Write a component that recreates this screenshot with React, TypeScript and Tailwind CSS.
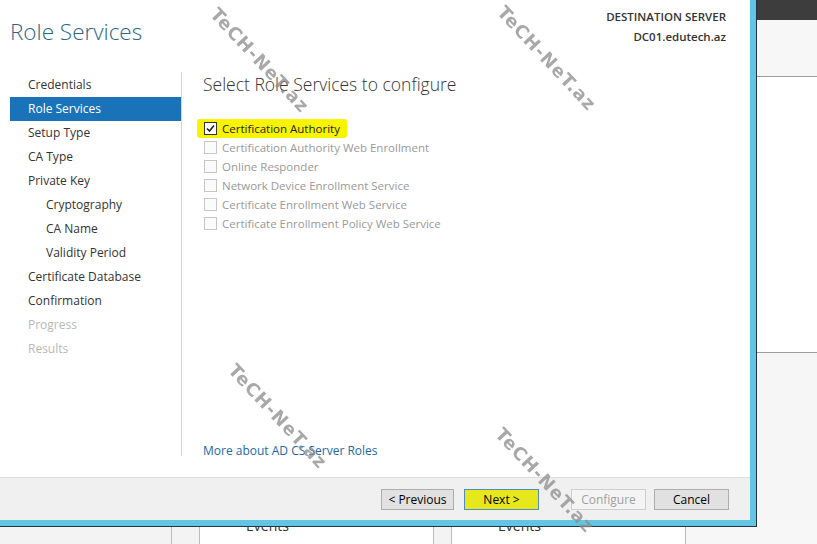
import React from "react";

const navItems: { label: string; indent?: boolean; selected?: boolean; disabled?: boolean }[] = [
  { label: "Credentials" },
  { label: "Role Services", selected: true },
  { label: "Setup Type" },
  { label: "CA Type" },
  { label: "Private Key" },
  { label: "Cryptography", indent: true },
  { label: "CA Name", indent: true },
  { label: "Validity Period", indent: true },
  { label: "Certificate Database" },
  { label: "Confirmation" },
  { label: "Progress", disabled: true },
  { label: "Results", disabled: true },
];

const services = [
  { label: "Certification Authority", checked: true },
  { label: "Certification Authority Web Enrollment" },
  { label: "Online Responder" },
  { label: "Network Device Enrollment Service" },
  { label: "Certificate Enrollment Web Service" },
  { label: "Certificate Enrollment Policy Web Service" },
];

function Checkbox({ checked }: { checked?: boolean }) {
  return (
    <div
      className={
        "w-[13px] h-[13px] border flex items-center justify-center " +
        (checked ? "border-[#333] bg-white" : "border-[#c6c6c6] bg-[#fbfbfb]")
      }
    >
      {checked && (
        <svg width="9" height="9" viewBox="0 0 9 9">
          <path d="M1 4.5 L3.5 7 L8 1.5" fill="none" stroke="#222" strokeWidth="1.6" />
        </svg>
      )}
    </div>
  );
}

function Button({ label, variant }: { label: string; variant?: "next" | "disabled" }) {
  const cls =
    variant === "next"
      ? "bg-[#e6e81c] border-[#4f8cc4] text-black"
      : variant === "disabled"
      ? "bg-[#f4f4f4] border-[#cfcfcf] text-[#a0a0a0]"
      : "bg-[#e1e1e1] border-[#adadad] text-black";
  return (
    <div className={"w-[75px] h-[21px] border flex items-center justify-center text-[12px] " + cls}>
      {label}
    </div>
  );
}

function Watermark({ x, y }: { x: number; y: number }) {
  return (
    <div
      className="absolute -translate-x-1/2 -translate-y-1/2 rotate-[47deg] text-[18px] font-bold tracking-[1px] text-[#8c8c8c] whitespace-nowrap opacity-75 pointer-events-none"
      style={{ left: x, top: y, fontFamily: "'DejaVu Sans', sans-serif" }}
    >
      TeCH-NeT.az
    </div>
  );
}

export default function App() {
  return (
    <div
      className="relative w-[817px] h-[544px] overflow-hidden bg-[#f7f7f7] text-[#333]"
      style={{ fontFamily: "'Segoe UI', 'Open Sans', 'Noto Sans', sans-serif" }}
    >
      <div className="flex h-[527px]">
        {/* dialog */}
        <div className="w-[757px] bg-[#1d3645] pr-px pb-px">
          <div className="h-full bg-[#64c4e4] pr-[6px] pb-[6px]">
            <div className="h-full bg-white flex flex-col">
              <div className="h-[72px] flex justify-between">
                <div className="pl-[10px] pt-[15px] text-[22.5px] font-light text-[#2d6486]">
                  Role Services
                </div>
                <div className="pr-[24px] pt-[7px] text-right text-[11.5px] leading-[20px] text-[#333]">
                  <div className="font-semibold">DESTINATION SERVER</div>
                  <div className="font-semibold">DC01.edutech.az</div>
                </div>
              </div>
              <div className="flex h-[384px]">
                <div className="w-[182px] pl-[10px] border-r border-[#d4d4d4]">
                  <div className="mt-[1px]">
                    {navItems.map((n) => (
                      <div
                        key={n.label}
                        className={
                          "h-[24px] flex items-center text-[12px] " +
                          (n.indent ? "pl-[36px] " : "pl-[18px] ") +
                          (n.selected
                            ? "bg-[#1a72b9] text-white"
                            : n.disabled
                            ? "text-[#b8b8b8]"
                            : "text-[#333]")
                        }
                      >
                        {n.label}
                      </div>
                    ))}
                  </div>
                </div>
                <div className="flex-1 pl-[21px] flex flex-col">
                  <div className="text-[17.5px] font-light text-[#333] leading-[24px]">
                    Select Role Services to configure
                  </div>
                  <div className="mt-[23px] flex flex-col">
                    {services.map((s) => (
                      <div key={s.label} className="relative h-[19px] flex items-center gap-[5px] pl-[1px]">
                        {s.checked && (
                          <div className="absolute -left-[6px] top-0 w-[150px] h-[19px] bg-[#f8f400] rounded-[3px] blur-[0.6px]" />
                        )}
                        <div className="relative">
                          <Checkbox checked={s.checked} />
                        </div>
                        <div
                          className={
                            "relative text-[11.5px] " + (s.checked ? "text-[#222]" : "text-[#9a9a9a]")
                          }
                        >
                          {s.label}
                        </div>
                      </div>
                    ))}
                  </div>
                  <div className="mt-auto -mb-[4px] text-[12px] text-[#2368a8]">
                    More about AD CS Server Roles
                  </div>
                </div>
              </div>
              <div className="flex-1" />
              <div className="h-[43px] border-t border-[#dcdcdc] bg-[#f0f0f0] flex items-start pt-[11px] pl-[381px] pr-[21px]">
                <Button label="< Previous" />
                <div className="ml-[10px]">
                  <Button label="Next >" variant="next" />
                </div>
                <div className="ml-[32px]">
                  <Button label="Configure" variant="disabled" />
                </div>
                <div className="ml-[8px]">
                  <Button label="Cancel" />
                </div>
              </div>
            </div>
          </div>
        </div>
        {/* right background window */}
        <div className="flex-1 flex flex-col">
          <div className="h-[20px] bg-[#3d3d3d]" />
          <div className="h-[57px] bg-[#f7f7f7] border-b border-[#9e9e9e]" />
          <div className="h-[276px] bg-white border-b border-[#9e9e9e]" />
          <div className="flex-1 bg-[#f6f6f6]" />
        </div>
      </div>
      {/* background strip below dialog */}
      <div className="flex h-[17px] text-[14px] text-[#333]">
        <div className="w-[172px] bg-[#f3f3f3] border-r border-[#bbb]" />
        <div className="w-[28px] bg-[#f3f3f3] border-r border-[#bbb]" />
        <div className="w-[234px] bg-white border-r border-[#bbb] pl-[46px] leading-[10px] overflow-hidden">
          <span className="relative -top-[6px]">Events</span>
        </div>
        <div className="w-[18px] bg-[#f3f3f3] border-r border-[#bbb]" />
        <div className="w-[234px] bg-white border-r border-[#bbb] pl-[46px] leading-[10px] overflow-hidden">
          <span className="relative -top-[6px]">Events</span>
        </div>
        <div className="flex-1 bg-[#f7f7f7]" />
      </div>

      <Watermark x={260} y={60} />
      <Watermark x={547} y={58} />
      <Watermark x={278} y={416} />
      <Watermark x={545} y={480} />
    </div>
  );
}
